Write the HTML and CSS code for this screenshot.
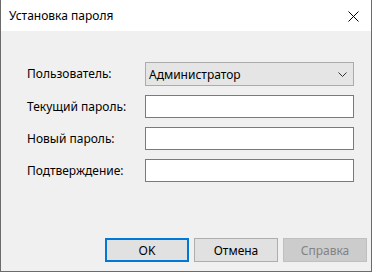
FILE: index.html
```html
<!DOCTYPE html>
<html lang="ru">
<head>
<meta charset="utf-8">
<title>Установка пароля</title>
<link rel="stylesheet" href="styles.css">
</head>
<body>
<div class="window">
  <div class="titlebar">
    <span class="title">Установка пароля</span>
    <span class="close">
      <svg width="11" height="11" viewBox="0 0 11 11"><path d="M0.5 0.5 L10.5 10.5 M10.5 0.5 L0.5 10.5" stroke="#000" stroke-width="1" fill="none"/></svg>
    </span>
  </div>
  <div class="content">
    <div class="form">
      <div class="row">
        <span class="label">Пользователь:</span>
        <div class="combo">
          <span class="combo-text">Администратор</span>
          <svg class="chev" width="9" height="5" viewBox="0 0 9 5"><path d="M0.5 0.5 L4.5 4.5 L8.5 0.5" stroke="#333" stroke-width="1" fill="none"/></svg>
        </div>
      </div>
      <div class="row">
        <span class="label">Текущий пароль:</span>
        <div class="field"></div>
      </div>
      <div class="row">
        <span class="label">Новый пароль:</span>
        <div class="field"></div>
      </div>
      <div class="row">
        <span class="label">Подтверждение:</span>
        <div class="field"></div>
      </div>
    </div>
    <div class="buttons">
      <button class="btn btn-default">OK</button>
      <button class="btn">Отмена</button>
      <button class="btn btn-disabled">Справка</button>
    </div>
  </div>
</div>
</body>
</html>
```
FILE: styles.css
```css
html, body {
  margin: 0;
  padding: 0;
  background: #f0f0f0;
}
.window {
  box-sizing: border-box;
  width: 372px;
  height: 272px;
  border-left: 1px solid #6b6b6b;
  border-right: 1px solid #6b6b6b;
  border-bottom: 1px solid #6b6b6b;
  background: #f0f0f0;
  font-family: "Noto Sans", "Liberation Sans", sans-serif;
  font-size: 12px;
  color: #000;
  display: flex;
  flex-direction: column;
}
.titlebar {
  height: 31px;
  background: #fff;
  display: flex;
  align-items: center;
  justify-content: space-between;
  padding: 0 12px 0 8px;
}
.title {
  font-size: 12px;
  line-height: 16px;
  padding-top: 1px;
}
.close {
  display: flex;
  width: 11px;
  height: 11px;
  margin-top: 1px;
}
.content {
  flex: 1;
  display: flex;
  flex-direction: column;
  justify-content: space-between;
  padding: 31px 0 9px 26px;
}
.form {
  display: flex;
  flex-direction: column;
  gap: 9px;
}
.row {
  display: flex;
  align-items: center;
}
.label {
  width: 118px;
  line-height: 16px;
}
.combo {
  box-sizing: border-box;
  width: 209px;
  height: 24px;
  background: #e5e5e5;
  border: 1px solid #acacac;
  display: flex;
  align-items: center;
  justify-content: space-between;
  padding: 0 6px 0 3px;
}
.combo-text {
  line-height: 16px;
  padding-top: 1px;
}
.chev {
  display: block;
  margin-top: 1px;
}
.field {
  box-sizing: border-box;
  width: 209px;
  height: 23px;
  background: #fff;
  border: 1px solid #7a7a7a;
}
.buttons {
  display: flex;
  gap: 5px;
  padding-left: 78px;
}
.btn {
  box-sizing: border-box;
  width: 84px;
  height: 24px;
  margin: 0;
  padding: 0;
  background: #e1e1e1;
  border: 1px solid #adadad;
  font-family: "Noto Sans", "Liberation Sans", sans-serif;
  font-size: 12px;
  color: #000;
}
.btn-default {
  border: 2px solid #0078d7;
}
.btn-disabled {
  background: #cccccc;
  border-color: #bfbfbf;
  color: #838383;
}
```
